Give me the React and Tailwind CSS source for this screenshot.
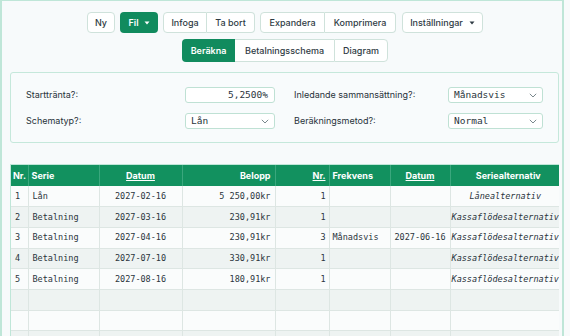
import React from "react";

const rows = [
  { nr: 1, serie: "Lån", datum: "2027-02-16", belopp: "5 250,00kr", antal: 1, frekvens: "", slut: "", alt: "Lånealternativ" },
  { nr: 2, serie: "Betalning", datum: "2027-03-16", belopp: "230,91kr", antal: 1, frekvens: "", slut: "", alt: "Kassaflödesalternativ" },
  { nr: 3, serie: "Betalning", datum: "2027-04-16", belopp: "230,91kr", antal: 3, frekvens: "Månadsvis", slut: "2027-06-16", alt: "Kassaflödesalternativ" },
  { nr: 4, serie: "Betalning", datum: "2027-07-10", belopp: "330,91kr", antal: 1, frekvens: "", slut: "", alt: "Kassaflödesalternativ" },
  { nr: 5, serie: "Betalning", datum: "2027-08-16", belopp: "180,91kr", antal: 1, frekvens: "", slut: "", alt: "Kassaflödesalternativ" },
];

const emptyRows = [6, 7, 8];

function Caret({ className }) {
  return (
    <svg width="6" height="4" viewBox="0 0 6 4" className={className}>
      <path d="M0.5 0.5 L5.5 0.5 L3 3.5 Z" fill="currentColor" />
    </svg>
  );
}

function Chevron() {
  return (
    <svg width="8" height="5" viewBox="0 0 8 5" className="text-[#6b7a80]">
      <path d="M0.8 0.8 L4 4 L7.2 0.8" fill="none" stroke="currentColor" strokeWidth="0.9" />
    </svg>
  );
}

const btn =
  "h-[21px] flex items-center justify-center border border-[#cfe2db] bg-white text-[9px] font-medium text-[#2f3b44]";

const field =
  "h-[16px] border border-[#bfe1d4] rounded-[3px] bg-white flex items-center text-[9.5px] text-[#2a343b]";

const mono = { fontFamily: "'DejaVu Sans Mono', monospace" };

export default function App() {
  return (
    <div
      className="w-[570px] h-[336px] overflow-hidden bg-[#f8fafb]"
      style={{ fontFamily: "Inter, 'Noto Sans', sans-serif" }}
    >
      <div className="w-[564px] h-[340px] border-l-2 border-r-2 border-t border-[#bfe6d8] bg-[#f7fafb] pt-[11px]">
        {/* toolbar */}
        <div className="flex justify-center gap-[5px] pl-[6px]">
          <button className={`${btn} w-[28px] rounded-[4px]`}>Ny</button>
          <button className="h-[21px] w-[38px] rounded-[4px] bg-[#118b5e] text-white text-[9px] font-semibold flex items-center justify-center gap-[5px]">
            Fil <Caret className="text-white" />
          </button>
          <div className="flex">
            <button className={`${btn} w-[44px] rounded-l-[4px]`}>Infoga</button>
            <button className={`${btn} w-[48px] rounded-r-[4px] border-l-0`}>Ta bort</button>
          </div>
          <div className="flex">
            <button className={`${btn} w-[65px] rounded-l-[4px]`}>Expandera</button>
            <button className={`${btn} w-[71px] rounded-r-[4px] border-l-0`}>Komprimera</button>
          </div>
          <button className={`${btn} w-[81px] rounded-[4px] gap-[6px] ml-[1px]`}>
            Inställningar <Caret className="text-[#2f3b44]" />
          </button>
        </div>

        {/* tabs */}
        <div className="flex justify-center mt-[6px] pl-[6px]">
          <button className="h-[23px] w-[53px] rounded-l-[4px] bg-[#118b5e] text-white text-[9px] font-semibold">
            Beräkna
          </button>
          <button className="h-[23px] w-[99px] border-y border-[#cfe2db] bg-white text-[9px] font-medium text-[#2f3b44]">
            Betalningsschema
          </button>
          <button className="h-[23px] w-[54px] rounded-r-[4px] border border-[#cfe2db] bg-white text-[9px] font-medium text-[#2f3b44]">
            Diagram
          </button>
        </div>

        {/* form panel */}
        <div className="ml-[8px] mt-[10px] w-[549px] border border-[#c5e8db] rounded-[3px] bg-[#f8fbfc] pt-[14px] pb-[13px] pl-[15px]">
          <div className="grid grid-cols-[159px_90px_173px_95px] gap-y-[10px] items-center text-[9px] text-[#27323a]">
            <div>Starttränta?:</div>
            <div className={`${field} justify-end pr-[6px]`} style={mono}>
              5,2500%
            </div>
            <div className="pl-[19px]">Inledande sammansättning?:</div>
            <div className={`${field} justify-between px-[5px]`} style={mono}>
              Månadsvis <Chevron />
            </div>

            <div>Schematyp?:</div>
            <div className={`${field} justify-between px-[5px]`} style={mono}>
              Lån <Chevron />
            </div>
            <div className="pl-[19px]">Beräkningsmetod?:</div>
            <div className={`${field} justify-between px-[5px]`} style={mono}>
              Normal <Chevron />
            </div>
          </div>
        </div>

        {/* schedule table */}
        <div className="ml-[8px] mt-[21px] w-[549px] overflow-hidden border-t border-l border-[#bfe6d8]">
          <table className="table-fixed border-collapse w-[549px]">
            <colgroup>
              <col className="w-[17px]" />
              <col className="w-[71px]" />
              <col className="w-[83px]" />
              <col className="w-[93px]" />
              <col className="w-[54px]" />
              <col className="w-[61px]" />
              <col className="w-[60px]" />
              <col className="w-[110px]" />
            </colgroup>
            <thead>
              <tr className="bg-[#12915f] text-white text-[9px] font-semibold h-[21px]">
                <th className="text-left pl-[2px] border-r border-[#3aa77d]">Nr.</th>
                <th className="text-left pl-[3px] border-r border-[#3aa77d]">Serie</th>
                <th className="text-center border-r border-[#3aa77d]"><span className="underline">Datum</span></th>
                <th className="text-right pr-[4px] border-r border-[#3aa77d]">Belopp</th>
                <th className="text-right pr-[3px] border-r border-[#3aa77d]"><span className="underline">Nr.</span></th>
                <th className="text-left pl-[3px] border-r border-[#3aa77d]">Frekvens</th>
                <th className="text-center border-r border-[#3aa77d]"><span className="underline">Datum</span></th>
                <th className="text-center pl-[6px]">Seriealternativ</th>
              </tr>
            </thead>
            <tbody className="text-[8.5px] text-[#2b353c]" style={mono}>
              {rows.map((r, i) => (
                <tr key={r.nr} className={`h-[20.7px] border-b border-[#dde6e3] ${i % 2 === 0 ? "bg-[#fafcfc]" : "bg-[#eef3f2]"}`}>
                  <td className="pl-[4px] border-r border-[#dde6e3]">{r.nr}</td>
                  <td className="pl-[4px] border-r border-[#dde6e3]">{r.serie}</td>
                  <td className="text-center border-r border-[#dde6e3]">{r.datum}</td>
                  <td className="text-right pr-[4px] border-r border-[#dde6e3]">{r.belopp}</td>
                  <td className="text-right pr-[3px] border-r border-[#dde6e3]">{r.antal}</td>
                  <td className="pl-[3px] border-r border-[#dde6e3]">{r.frekvens}</td>
                  <td className="text-center border-r border-[#dde6e3]">{r.slut}</td>
                  <td className="text-center italic whitespace-nowrap">{r.alt}</td>
                </tr>
              ))}
              {emptyRows.map((n, i) => (
                <tr key={n} className={`h-[20.7px] border-b border-[#dde6e3] ${(i + 5) % 2 === 0 ? "bg-[#fafcfc]" : "bg-[#eef3f2]"}`}>
                  <td className="border-r border-[#dde6e3]"></td>
                  <td className="border-r border-[#dde6e3]"></td>
                  <td className="border-r border-[#dde6e3]"></td>
                  <td className="border-r border-[#dde6e3]"></td>
                  <td className="border-r border-[#dde6e3]"></td>
                  <td className="border-r border-[#dde6e3]"></td>
                  <td className="border-r border-[#dde6e3]"></td>
                  <td></td>
                </tr>
              ))}
            </tbody>
          </table>
        </div>
      </div>
    </div>
  );
}
